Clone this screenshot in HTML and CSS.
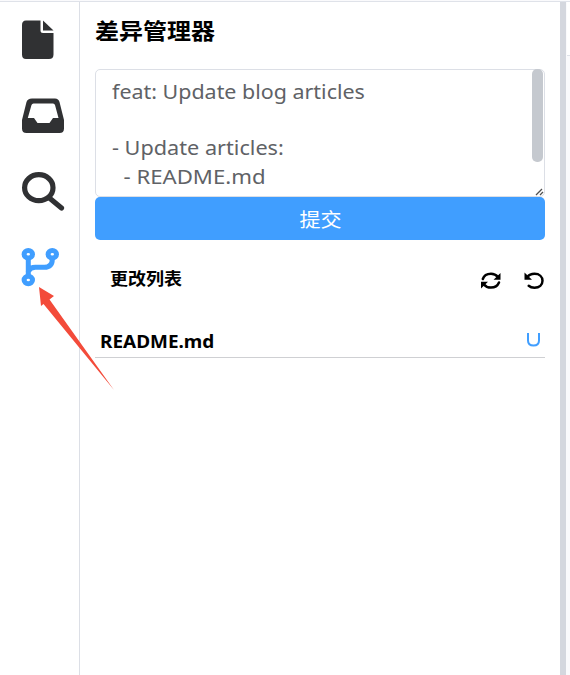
FILE: index.html
```html
<!DOCTYPE html>
<html lang="zh-CN">
<head>
<meta charset="utf-8">
<title>差异管理器</title>
<link rel="stylesheet" href="styles.css">
</head>
<body>
<div class="app">
  <nav class="rail">
    <svg class="icon" width="44" height="40" viewBox="0 0 44 40"><path d="M5 .5h14.5V10.500q0 2.500 2.500 2.500h10.500v21.500q0 4.500-4.500 4.500H5Q1 39 1 34.500V5Q1 .5 5 .5z"/><path d="M22 .5L32.500 10.500H22z"/></svg>
    <svg class="icon" width="44" height="40" viewBox="0 0 44 40"><path fill-rule="evenodd" d="M11 2.500h23q3.500 0 4.500 3.500l4.500 18v8.500q0 4.500-4.500 4.500h-33Q1 37 1 32.500V24L5.500 6q1-3.500 5.500-3.500zM12.500 7.500q-1.500 0-2 1.500L6.800 22h6.200l3.500 5h12l3.500-5h5.500L34 9q-.5-1.500-2-1.500z"/></svg>
    <svg class="icon line dark" width="44" height="40" viewBox="0 0 44 40"><ellipse cx="17.800" cy="15.700" rx="14.200" ry="13" stroke-width="5.200"/><path d="M29 26.500L40.500 36" stroke-width="5.200"/></svg>
    <svg class="icon line active" width="44" height="40" viewBox="0 0 44 40"><g stroke-width="5"><ellipse cx="7.300" cy="6.200" rx="4.200" ry="3.800"/><ellipse cx="31.300" cy="6.200" rx="4.200" ry="3.800"/><ellipse cx="7.300" cy="32" rx="4.200" ry="3.800"/><path d="M7.300 11v16M31.300 11c0 6-3 8.300-8 8.300h-9q-5 0-7 4"/></g></svg>
  </nav>
  <main class="panel">
    <h1 class="title"><span>差异管理器</span></h1>
    <div class="message">
      <pre class="text"><span class="l1">feat: Update blog articles</span>

<span class="l2">- Update articles:</span>
<span class="l3">  - README.md</span></pre>
      <i class="thumb"></i>
      <svg class="grip" width="9" height="8" viewBox="0 0 9 8"><path d="M1 7L7 1M5 7l3-3"/></svg>
    </div>
    <button class="submit"><span>提交</span></button>
    <div class="listhead">
      <h2><span>更改列表</span></h2>
      <div class="tools">
        <svg width="22" height="20" viewBox="0 0 22 20"><path class="stroke" d="M2.800 8C4 4.500 7.500 2.800 11 2.800c3 0 5.500 1.500 7 3.200M19 11.500c-1.500 3.500-4.500 5.100-8 5.100-3 0-5.500-1.200-7-3.200"/><path d="M20.500 2v6.800h-7zM1 17.500v-6.800h7z"/></svg>
        <svg width="22" height="20" viewBox="0 0 22 20"><path class="stroke" d="M4.500 6C6 3.800 8.500 2.800 11.500 2.800c5 0 8 3 8 7s-3.200 6.900-8 6.900c-2.500 0-4.200-.5-5.800-1.900"/><path d="M1.500 1.500v7.200h7.500z"/></svg>
      </div>
    </div>
    <div class="file"><span class="name">README.md</span><svg class="state" width="15" height="16" viewBox="0 0 15 16" role="img" aria-label="U"><path d="M2 1v7.500c0 3.500 2 5 5.500 5s5.500-1.500 5.500-5V1"/></svg></div>
  </main>
  <div class="split"></div>
  <aside class="editor"><div class="tab"></div></aside>
</div>
<svg class="arrow" width="80" height="108" viewBox="0 0 80 108"><path d="M4 1l15 9-4.500 3.500L79 104 8.500 18 6 20z"/></svg>
</body>
</html>
```
FILE: styles.css
```css
* { box-sizing: border-box; }
body { margin: 0; background: #fff; font-family: "Noto Sans", "Noto Sans CJK SC", sans-serif; overflow: hidden; }
.app { display: flex; width: 570px; height: 675px; border-top: 1px solid #fafafc; position: relative; }
.app::before { content: ""; position: absolute; top: 0; left: 0; right: 0; height: 1px; background: #dfe2e9; }
.rail { width: 80px; border-right: 1px solid #dcdfe6; padding: 19px 0 0 21px; display: flex; flex-direction: column; gap: 36px; }
.icon { display: block; flex: none; fill: #303133; overflow: visible; }
.line { fill: none; stroke-linecap: round; }
.dark { stroke: #303133; }
.active { stroke: #409eff; }
.panel { width: 480px; padding: 11px 15px 0; }
h1, h2 { margin: 0; font-weight: 700; color: #000; white-space: nowrap; }
h1 span, h2 span, .submit span, .text span, .name { display: inline-block; transform-origin: 0 50%; }
.title { height: 57px; font-size: 22px; line-height: 36px; }
.title span { transform: scaleX(1.09); }
.message { height: 128px; border: 1px solid #dcdfe6; border-radius: 5px; position: relative; padding: 8px 16px 0; }
.text { margin: 0; font: 20px/28.200px "Noto Sans", sans-serif; color: #606266; white-space: pre; }
.l1 { transform: scaleX(1.072); }
.l2 { transform: scaleX(1.083); }
.l3 { transform: scaleX(1.108); }
.thumb { position: absolute; right: 1px; top: -1px; width: 11px; height: 93px; border-radius: 5px; background: #c5c9cf; }
.grip { position: absolute; right: 0; bottom: 0; fill: none; stroke: #505050; stroke-width: 1.300; }
.submit { display: flex; align-items: center; justify-content: center; width: 100%; height: 43px; border: 0; border-radius: 5px; background: #409eff; color: #fff; font: 19.500px "Noto Sans CJK SC", sans-serif; padding: 0 0 0 2px; }
.submit span { transform: scaleX(1.08); transform-origin: 50% 50%; }
.listhead { display: flex; justify-content: space-between; height: 78px; padding: 25px 0 0 15px; }
h2 { font-size: 16.500px; line-height: 28px; }
h2 span { transform: scaleX(1.09); }
.tools { display: flex; gap: 21px; margin-top: 6px; }
.tools svg { display: block; }
.stroke { fill: none; stroke: #000; stroke-width: 2.500; stroke-linecap: round; }
.file { display: flex; align-items: flex-start; justify-content: space-between; height: 40px; padding: 11px 4px 0 5px; border-bottom: 1px solid #cfd0d3; color: #000; font-size: 17px; font-weight: 700; line-height: 26px; }
.name { transform: scaleX(1.115); }
.state { margin-top: 3px; fill: none; stroke: #409eff; stroke-width: 2; }
.split { width: 6px; margin-top: 1px; background: #d4d7de; }
.editor { flex: 1; background: #fafafc; }
.tab { height: 55px; margin-left: 1px; background: #fff; border-bottom: 1px solid #dfe2e9; }
.arrow { position: absolute; left: 35px; top: 286px; fill: #f34b3a; }
```
